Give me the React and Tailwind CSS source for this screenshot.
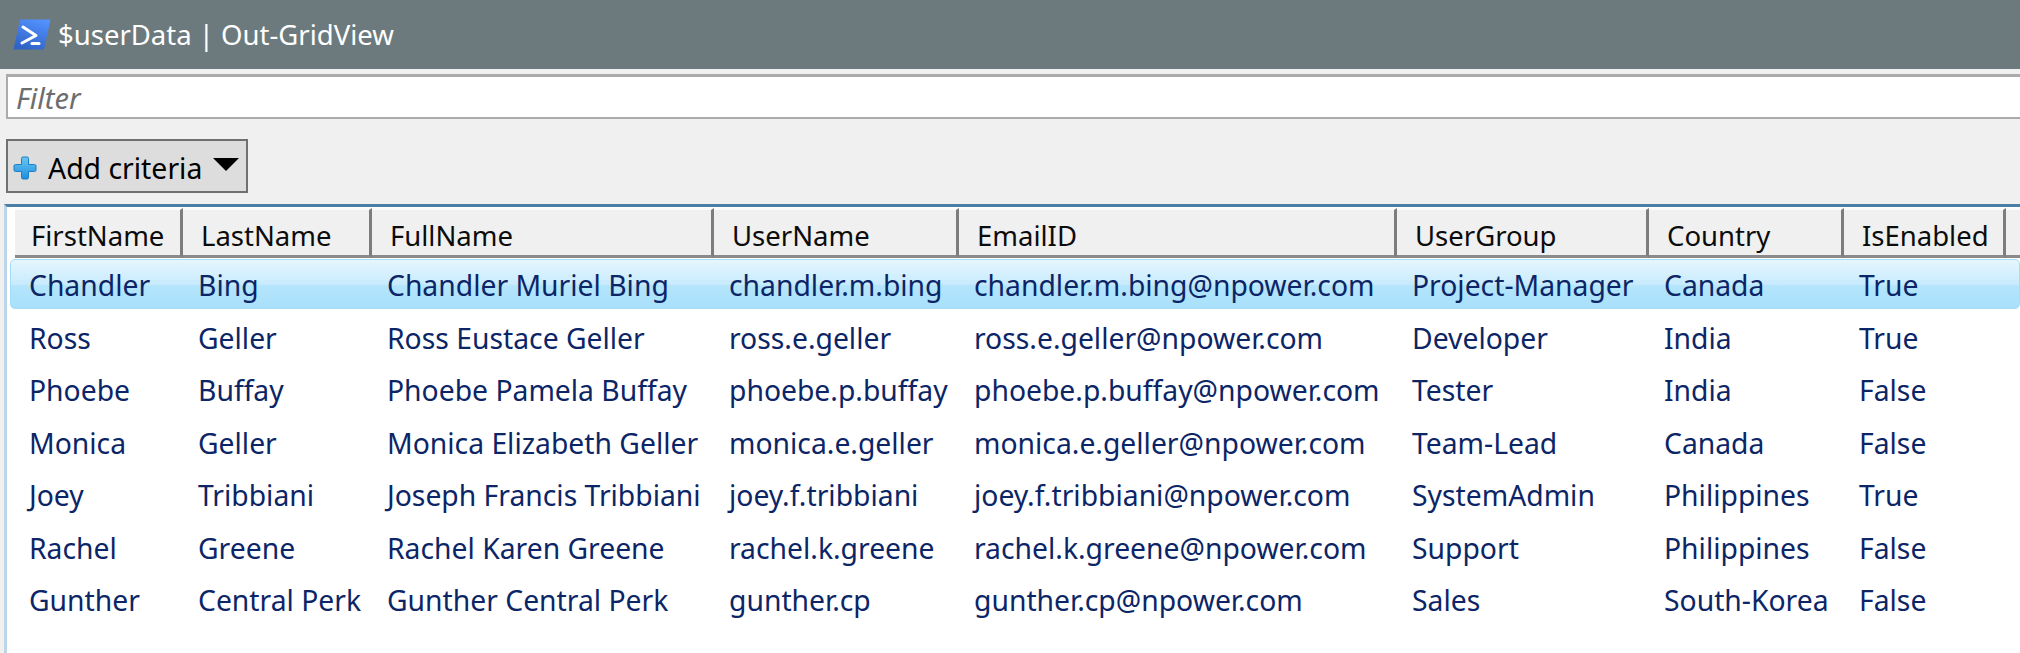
import React from 'react';

const FONT = '"Noto Sans", "Open Sans", sans-serif';

const COLUMNS = [
  { name: 'FirstName', width: 169, head: 168 },
  { name: 'LastName', width: 189, head: 189 },
  { name: 'FullName', width: 342, head: 342 },
  { name: 'UserName', width: 245, head: 245 },
  { name: 'EmailID', width: 438, head: 438 },
  { name: 'UserGroup', width: 252, head: 252 },
  { name: 'Country', width: 195, head: 195 },
  { name: 'IsEnabled', width: 162, head: 162 },
];

const ROWS = [
  ['Chandler', 'Bing', 'Chandler Muriel Bing', 'chandler.m.bing', 'chandler.m.bing@npower.com', 'Project-Manager', 'Canada', 'True'],
  ['Ross', 'Geller', 'Ross Eustace Geller', 'ross.e.geller', 'ross.e.geller@npower.com', 'Developer', 'India', 'True'],
  ['Phoebe', 'Buffay', 'Phoebe Pamela Buffay', 'phoebe.p.buffay', 'phoebe.p.buffay@npower.com', 'Tester', 'India', 'False'],
  ['Monica', 'Geller', 'Monica Elizabeth Geller', 'monica.e.geller', 'monica.e.geller@npower.com', 'Team-Lead', 'Canada', 'False'],
  ['Joey', 'Tribbiani', 'Joseph Francis Tribbiani', 'joey.f.tribbiani', 'joey.f.tribbiani@npower.com', 'SystemAdmin', 'Philippines', 'True'],
  ['Rachel', 'Greene', 'Rachel Karen Greene', 'rachel.k.greene', 'rachel.k.greene@npower.com', 'Support', 'Philippines', 'False'],
  ['Gunther', 'Central Perk', 'Gunther Central Perk', 'gunther.cp', 'gunther.cp@npower.com', 'Sales', 'South-Korea', 'False'],
];

function PowerShellIcon() {
  return (
    <svg width="38" height="31" viewBox="0 0 38 31" className="shrink-0">
      <defs>
        <linearGradient id="ps" x1="0.7" y1="0" x2="0.3" y2="1">
          <stop offset="0" stopColor="#5391fe" />
          <stop offset="1" stopColor="#2e62c4" />
        </linearGradient>
      </defs>
      <path d="M7 0.5H37.5L31 30.5H0.5Z" fill="url(#ps)" />
      <path d="M10 8L23 16.5L9 24" fill="none" stroke="#fff" strokeWidth="3" strokeLinecap="round" strokeLinejoin="round" />
      <path d="M19 24.5H26" stroke="#fff" strokeWidth="3" strokeLinecap="round" />
    </svg>
  );
}

function PlusIcon() {
  return (
    <svg width="24" height="24" viewBox="0 0 24 24" className="shrink-0">
      <defs>
        <linearGradient id="plus" x1="0" y1="0" x2="0" y2="1">
          <stop offset="0" stopColor="#6cc6f2" />
          <stop offset="1" stopColor="#1c8fdc" />
        </linearGradient>
      </defs>
      <path
        d="M8.5 2.5a1.5 1.5 0 0 1 1.5-1.5h4a1.5 1.5 0 0 1 1.5 1.5v6h6a1.5 1.5 0 0 1 1.5 1.5v4a1.5 1.5 0 0 1-1.5 1.5h-6v6a1.5 1.5 0 0 1-1.5 1.5h-4a1.5 1.5 0 0 1-1.5-1.5v-6h-6A1.5 1.5 0 0 1 1 14v-4a1.5 1.5 0 0 1 1.5-1.5h6Z"
        fill="url(#plus)"
        stroke="#1a7fc4"
        strokeWidth="1"
      />
    </svg>
  );
}

function HeaderCell({ name, width, first }) {
  return (
    <div
      className={`flex h-[50px] shrink-0 items-center border-t-2 border-r-[3px] border-b-[3px] border-t-[#fafafa] border-r-[#7d7d7d] border-b-[#8a8a8a] bg-[#f0f0f0] pt-[6px] text-[27.5px] text-[#0c0c0c] ${first ? 'pl-[16px]' : 'pl-[18px]'}`}
      style={{ width }}
    >
      {name}
    </div>
  );
}

function Row({ row, selected }) {
  return (
    <div
      className={`flex shrink-0 items-center border pt-[2px] pl-[2px] text-[28.3px] text-[#0b2566] ${selected ? 'h-[50px] rounded-[5px] border-[#a5dcf6] bg-[linear-gradient(#e6f6fe,#c8ebfd_50%,#b4e5fc_54%,#a8e0fb_100%)]' : 'h-[52.4px] border-transparent'}`}
    >
      {row.map((cell, i) => (
        <div key={COLUMNS[i].name} className="shrink-0 whitespace-nowrap pl-[16px]" style={{ width: COLUMNS[i].width }}>
          {cell}
        </div>
      ))}
    </div>
  );
}

export default function App() {
  return (
    <div className="flex h-[653px] w-[2020px] flex-col overflow-hidden bg-[#f0f0f0]" style={{ fontFamily: FONT }}>
      <div className="flex h-[69px] shrink-0 items-center gap-[7px] bg-[#6c7a7e] pl-[13px] text-[27.5px] text-white">
        <PowerShellIcon />
        <span>$userData | Out-GridView</span>
      </div>

      <div className="mt-[5px] ml-[6px] flex h-[45px] shrink-0 items-center border-t-[3px] border-b-2 border-l-2 border-[#ababab] bg-white pt-[1px] pl-[8px] text-[29px] text-[#6d6d6d] italic">
        Filter
      </div>

      <div className="mt-[20px] ml-[6px] flex h-[54px] w-[242px] shrink-0 items-center border-2 border-[#707070] bg-[#dddddd] pt-[4px] pl-[5px] text-[28.4px] text-black">
        <PlusIcon />
        <span className="ml-[11px]">Add criteria</span>
        <span className="mb-[8px] ml-[11px] h-0 w-0 border-x-[13px] border-t-[13px] border-x-transparent border-t-black" />
      </div>

      <div className="mt-[11px] ml-[4px] flex min-h-0 flex-1 flex-col border-t-[3px] border-l-[3px] border-t-[#4a7ea6] border-l-[#bcd5e8] bg-white">
        <div className="mt-[1px] ml-[8px] flex">
          {COLUMNS.map((col, i) => (
            <HeaderCell key={col.name} name={col.name} width={col.head} first={i === 0} />
          ))}
          <div className="h-[50px] flex-1 border-t-2 border-b-[3px] border-t-[#fafafa] border-b-[#8a8a8a] bg-[#f0f0f0]" />
        </div>
        <div className="mt-[1px] ml-[3px] flex flex-col">
          {ROWS.map((row, i) => (
            <div key={row[0]} className={i === 1 ? 'pt-[2px]' : ''}>
              <Row row={row} selected={i === 0} />
            </div>
          ))}
        </div>
      </div>
    </div>
  );
}
